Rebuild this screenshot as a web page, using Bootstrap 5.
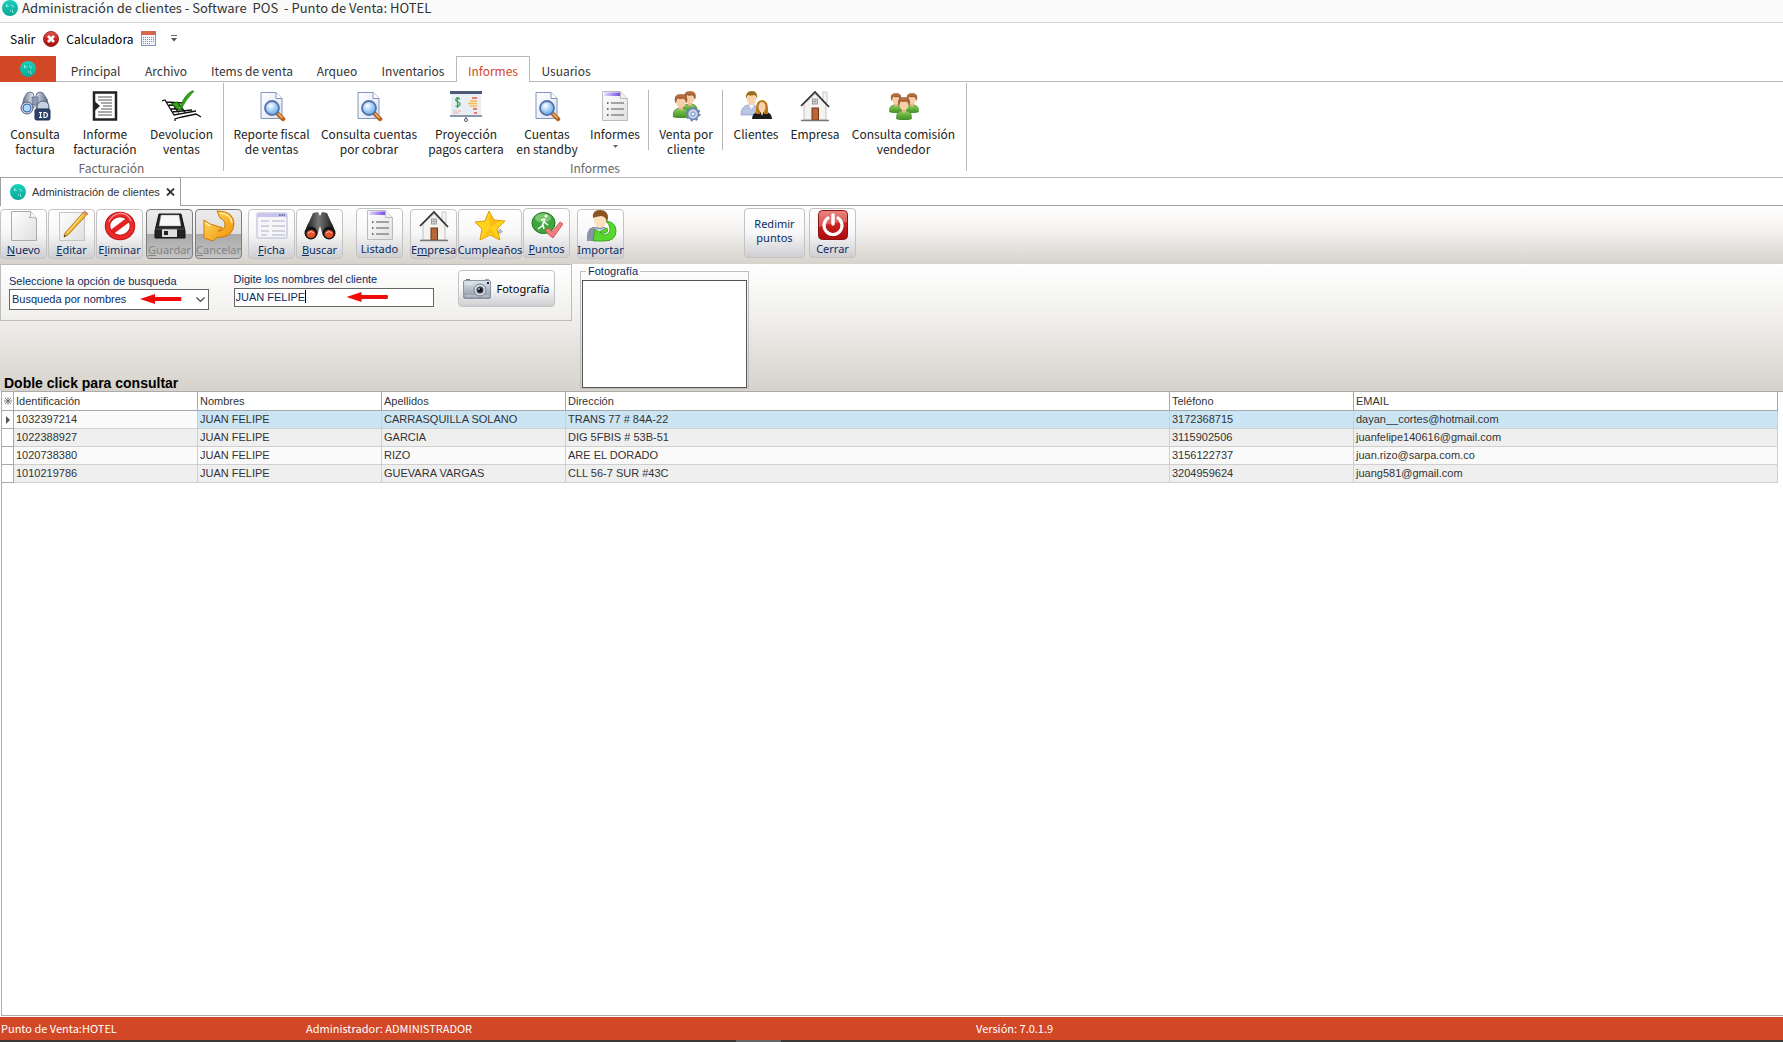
<!DOCTYPE html>
<html lang="es">
<head>
<meta charset="utf-8">
<meta name="viewport" content="width=device-width, initial-scale=1">
<title>Administración de clientes</title>
<link href="https://cdn.jsdelivr.net/npm/bootstrap@5.3.0/dist/css/bootstrap.min.css" rel="stylesheet">
<script src="https://cdn.jsdelivr.net/npm/bootstrap@5.3.0/dist/js/bootstrap.bundle.min.js"></script>
<style>
:root{--accent:#d24726;--line:#b9b9b9;--navy:#0b2c5f}
body{font-family:"Noto Sans CJK SC","Open Sans",sans-serif;font-size:12px;line-height:15px;color:#222;background:#fff;min-height:100vh}
button{font-family:inherit;color:inherit}
svg{display:block;flex:none}
.titlebar{height:23px;background:#fafafa;border-bottom:1px solid #d5d5d5;font-size:13px;line-height:16px;color:#333;padding:0 0 6px 2px;gap:4px}
.titlebar span{white-space:pre}
.quickbar{height:33px;padding:0 10px 2px;gap:7px;color:#000}
.plain-btn{border:0;background:none;padding:0}
.tabs-row{height:26px;border-bottom:1px solid var(--line)}
.file-tab{width:56px;height:26px;background:var(--accent);margin-right:3px}
.rtabs{display:grid;grid-template-columns:73px 68px 104px 66px 86px 74px 72px;height:26px}
.rtabs button{border:1px solid transparent;border-bottom:0;background:none;padding:2px 0 0;color:#333}
.rtabs button.active{border-color:var(--line);background:#fff;color:var(--accent)}
.ribbon{height:96px;border-bottom:1px solid var(--line)}
.rgroup{height:88px;margin-top:1px;border-right:1px solid var(--line)}
.rgroup-items{display:grid;height:77px}
.cols-a{grid-template-columns:70px 70px 83px}
.cols-b{grid-template-columns:95px 100px 94px 68px 68px 74px 66px 52px 125px}
.ritem{border:0;background:none;padding:7px 0 0;display:flex;flex-direction:column;align-items:center;gap:4px;white-space:nowrap}
.sep-r{position:relative}
.sep-r::after{content:"";position:absolute;right:0;top:7px;width:1px;height:60px;background:var(--line)}
.rgroup-title{color:#666;text-align:center;height:15px}
.doc-tabs{height:29px;margin-top:-1px}
.doc-tab{width:181px;border:1px solid #a0a0a0;border-bottom:0;gap:6px;padding:0 9px;font:11px/15px "Liberation Sans",sans-serif;color:#333;white-space:nowrap}
.doc-rest{border-bottom:1px solid #a0a0a0}
.toolbar{height:58px;padding-top:2px;background:linear-gradient(#fff,#f4f3f1 40%,#d6d2cb);font:11px/13px "Noto Sans",sans-serif;color:var(--navy)}
.tbtn{width:47px;height:50px;padding:0 0 2px;border:1px solid #c3c3c3;border-radius:4px;background:linear-gradient(#fff,#f7f7f8 50%,#cfcfd2);display:flex;flex-direction:column;align-items:center;justify-content:space-between;white-space:nowrap}
.tbtn.low{margin-top:1px}
.tbtn.wide{width:64px}
.tbtn.mid{width:61px;white-space:normal;justify-content:center;padding-bottom:4px;line-height:14px}
.tbtn:disabled{border-color:#7d7d7d;background:linear-gradient(#ececec,#dedede 49%,#a9a9a9 50%,#c4c4c4);color:#858585}
.gap1{gap:1px}.gap2{gap:2px}
.ml3{margin-left:3px}.ml4{margin-left:4px}.ml6{margin-left:6px}.ml7{margin-left:7px}.ml13{margin-left:13px}.ml120{margin-left:120px}
.searcharea{height:127px;background:linear-gradient(#fff,#f1f0ed 40%,#d6d2cb);font:11px/13px "Liberation Sans",sans-serif;color:var(--navy);gap:8px}
.left-col{width:572px}
.searchbox{height:57px;border:1px solid #bcbcbc;padding:5px 16px 0 8px}
.fcol-a{padding-top:5px}.fcol-a label{display:block;padding-bottom:1px}
.fcol-b{padding-top:3px}.fcol-b label{display:block;padding-bottom:2px}
.fld{border:1px solid #666;border-radius:0;background:#fff;color:var(--navy);padding:0 1px;display:block;width:200px;font:inherit;outline:0}
select.fld{appearance:none;height:21px;width:200px;padding-left:2px}
input.fld{height:19px;padding-bottom:2px}
.fwrap{position:relative}
.over{position:absolute;pointer-events:none}
.ov-chev{right:4px;top:8px}
.ov-arrow1{left:131px;top:5px}
.ov-arrow2{left:111px;top:4px}
.ov-caret{left:71px;top:2px;width:1px;height:13px;background:#000}
.photo-btn{width:97px;height:37px;border:1px solid #c3c3c3;border-radius:4px;background:linear-gradient(#fff,#f7f7f8 50%,#cfcfd2);font:11px/13px "Noto Sans",sans-serif;color:#000;gap:5px}
.hint{font:bold 14px/16px "Liberation Sans",sans-serif;color:#000;padding-left:4px}
.photo-set{width:169px;height:124px;margin-top:1px;border:1px solid #bdbdbd;padding:0 1px 1px}
.photo-set legend{float:none;width:auto;margin:0 0 0 4px;padding:0 2px;font:inherit;line-height:13px;font-size:11px}
.photo-frame{border:1px solid #555;background:#fff;height:108px;margin-top:2px}
.grid-wrap{border:solid #ababab;border-width:1px 0 1px 1px;margin-left:1px;margin-bottom:1px}
.cgrid{width:calc(100% - 5px);table-layout:fixed;border-collapse:separate;border-spacing:0;font:11px/15px "Liberation Sans",sans-serif;color:#333}
.cgrid th,.cgrid td{padding:0 2px;height:18px;border-right:1px solid #cfcfcf;border-bottom:1px solid #cfcfcf;white-space:nowrap;font-weight:400;background:#fafafa}
.cgrid thead th{height:19px;background:#fff;border-color:#a5a9ac}
.cgrid tbody tr:nth-child(even) td{background:#efefef}
.cgrid tbody tr.current td{background:#cce5f5}
.cgrid tbody tr.current td.idcell{background:#fafafa}
.cgrid thead .ind,.cgrid tbody tr td.ind,.cgrid tbody tr.current td.ind{padding:0;background:#fff;border-color:#a5a9ac}
.cgrid .ind svg{margin:0 auto}
.statusbar{height:23px;background:var(--accent);color:#fff;font-size:11px;display:grid;grid-template-columns:305px 670px 1fr;padding-left:1px;align-items:center}
.shelf{height:2px;background:#3b3838}
.shelf div{width:45px;height:2px;margin-left:736px;background:#666}
</style>
</head>
<body class="d-flex flex-column">
<svg width="0" height="0" class="position-absolute" aria-hidden="true">
<defs>
<linearGradient id="gTeal" x1="0" y1="0" x2="0" y2="1"><stop offset="0" stop-color="#18d3bd"/><stop offset="1" stop-color="#0aa596"/></linearGradient>
<linearGradient id="gPage" x1="0" y1="0" x2="1" y2="1"><stop offset="0" stop-color="#fff"/><stop offset="1" stop-color="#dbe3f4"/></linearGradient>
<linearGradient id="gGrey" x1="0" y1="0" x2="1" y2="1"><stop offset="0" stop-color="#fff"/><stop offset="1" stop-color="#dfdfdf"/></linearGradient>
<linearGradient id="gPurple"><stop offset="0" stop-color="#e6dcff"/><stop offset="1" stop-color="#7a4be6"/></linearGradient>
<linearGradient id="gSteel"><stop offset="0" stop-color="#59647c"/><stop offset=".45" stop-color="#f0f3f8"/><stop offset="1" stop-color="#4f5b75"/></linearGradient>
<linearGradient id="gBlack"><stop offset="0" stop-color="#111"/><stop offset=".45" stop-color="#777"/><stop offset="1" stop-color="#111"/></linearGradient>
<linearGradient id="gGreen" x1="0" y1="0" x2="0" y2="1"><stop offset="0" stop-color="#8ed05a"/><stop offset="1" stop-color="#3f8f22"/></linearGradient>
<linearGradient id="gHair" x1="0" y1="0" x2="0" y2="1"><stop offset="0" stop-color="#c97a45"/><stop offset="1" stop-color="#8a431c"/></linearGradient>
<linearGradient id="gRed" x1="0" y1="0" x2="0" y2="1"><stop offset="0" stop-color="#e25b52"/><stop offset=".5" stop-color="#c9201c"/><stop offset="1" stop-color="#a80d0d"/></linearGradient>
<linearGradient id="gGold" x1="0" y1="0" x2="1" y2="1"><stop offset="0" stop-color="#ffe36a"/><stop offset="1" stop-color="#f08a00"/></linearGradient>
<linearGradient id="gCam" x1="0" y1="0" x2="0" y2="1"><stop offset="0" stop-color="#dfe6ec"/><stop offset="1" stop-color="#8693a2"/></linearGradient>
<radialGradient id="gLens" cx=".4" cy=".35"><stop offset="0" stop-color="#fff"/><stop offset="1" stop-color="#7fbdf0"/></radialGradient>
<symbol id="logo" viewBox="0 0 16 16"><circle cx="8" cy="8" r="8" fill="url(#gTeal)"/><path d="M4 4.500l2.500 1.500-2 1M4.500 4v3M9 5.500h2v2.500M8.500 10v2M10.500 9.500v3h1.500" fill="none" stroke="#b9f4ec" stroke-width=".6"/></symbol>
<symbol id="bino" viewBox="0 0 32 32"><path d="M8 3q3-2 6 0l1 3v12H2.500L5 8zM18 3q3-2 6 0l4 6 2 9H17V6z" fill="url(#gSteel)" stroke="#56617c" stroke-width=".8"/><rect x="13" y="7" width="6" height="8" fill="#8d99b3" stroke="#56617c" stroke-width=".6"/><circle cx="8" cy="18" r="6" fill="#c9d0de" stroke="#56617c"/><circle cx="8" cy="18" r="4" fill="#b3d8fb" stroke="#2f65b5"/><circle cx="24" cy="17" r="6" fill="#c9d0de" stroke="#56617c"/><rect x="16" y="19" width="15" height="11" rx="1.500" fill="#2c4469" stroke="#1d3050"/><path d="M20 22.500h3M21.500 22.500v5M20 27.500h3M25 22.500v5h1.500q2-.5 2-2.500t-2-2.500z" fill="none" stroke="#fff" stroke-width="1.200"/></symbol>
<symbol id="invoice" viewBox="0 0 32 32"><rect x="5" y="2.500" width="22" height="27" fill="#fff" stroke="#222" stroke-width="2.500"/><path d="M6 11.500l5 4.500-5 4.500z" fill="#222"/><path d="M9 7h14M9 10h14M12 13h11M14 16h9M12 19h11M9 22h14M9 25h14" stroke="#555" stroke-width="1.200"/></symbol>
<symbol id="cart" viewBox="0 0 40 32"><path d="M0 11l3-1 9 15 22-4M4 12l17 1M7 15l14 1M9 19l12 0M10 22l20-2M9 12l8 11M15 12l8 10M13 31v-2l7-2 14-3 5 3" fill="none" stroke="#111" stroke-width="1.300"/><path d="M10 14l5-2 3 5Q23 4 30 1h2Q24 9 18 21z" fill="#34a314" stroke="#1c7808" stroke-width=".7"/></symbol>
<symbol id="pagelens" viewBox="0 0 32 32"><path d="M5 2.500h15l6 6v20H5z" fill="url(#gPage)" stroke="#8394bd"/><path d="M20 2.500v6h6" fill="#fff" stroke="#8394bd"/><path d="M21 23l6 6" stroke="#b36222" stroke-width="4.500" stroke-linecap="round"/><path d="M22 23.500l4.500 4.500" stroke="#f2b66a" stroke-width="1.500"/><circle cx="16" cy="18" r="7" fill="url(#gLens)" stroke="#5673a9" stroke-width="1.800"/></symbol>
<symbol id="board" viewBox="0 0 34 32"><rect x="2" y="3" width="30" height="23" fill="#e9eef4"/><rect x="1" y="1" width="32" height="3" fill="#4a5a78"/><rect x="1" y="25" width="32" height="2" fill="#8b98ab"/><path d="M17 27v2" stroke="#4a5a78"/><circle cx="17" cy="30" r="1.500" fill="none" stroke="#4a5a78"/><path d="M11 9q-3-2-4 0t2 3 1.500 3-4 1M8.500 7v11" fill="none" stroke="#2fa84f" stroke-width="1.300"/><path d="M4 21h4M9 21h3M4 23h6" stroke="#e8a09a" stroke-width=".8"/><path d="M21 11h7M19 13.500h9M21 16h7" stroke="#f3bd4f" stroke-width="1.500"/><path d="M23 8h5M24 19h4M25 23h3" stroke="#e2574c" stroke-width="1.300"/></symbol>
<symbol id="list" viewBox="0 0 32 32"><path d="M3.500 1.500h18l7 7v22h-25z" fill="url(#gGrey)" stroke="#bbb"/><path d="M5 2.500h16v3.500H5z" fill="url(#gPurple)"/><path d="M21.500 1.500v7h7" fill="#f2f2f2" stroke="#bbb"/><path d="M12 13h13M12 19h13M12 25h13" stroke="#888" stroke-width="1.300"/><path d="M8 13h1.500M8 19h1.500M8 25h1.500" stroke="#444" stroke-width="1.500"/></symbol>
<symbol id="man" viewBox="0 0 16 22"><path d="M1 21q-1-7 5-8h4q6 1 5 8-7 2-14 0z" fill="url(#gGreen)" stroke="#3a7d20" stroke-width=".6"/><path d="M6 10h4v4q-2 2-4 0z" fill="#e9b58c"/><ellipse cx="8" cy="7" rx="4.500" ry="5.500" fill="#f6cfa9"/><path d="M3 8Q1 0 8 .5 15 0 13 8q-1-4-3-4-4 1-5-.5-1 1-2 4.500z" fill="url(#gHair)" stroke="#7d3c17" stroke-width=".5"/></symbol>
<symbol id="gear" viewBox="0 0 32 32"><use href="#man" x="12" y="1" width="16" height="22"/><use href="#man" x="1" y="4" width="20" height="24"/><circle cx="23" cy="24" r="5.500" fill="#c5d3ec" stroke="#6c83b0" stroke-width="1.500"/><circle cx="23" cy="24" r="6.500" fill="none" stroke="#6c83b0" stroke-width="2" stroke-dasharray="2.200 2.900"/><circle cx="23" cy="24" r="2" fill="#fff" stroke="#6c83b0"/></symbol>
<symbol id="couple" viewBox="0 0 32 32"><path d="M1 25q0-9 7-10h6q6 2 6 10z" fill="#b9c5e2" stroke="#8797bd" stroke-width=".7"/><path d="M9 15l2.500 4 2.500-4z" fill="#fff"/><ellipse cx="11.500" cy="9" rx="4.500" ry="6" fill="#f7d3ab"/><path d="M6 9Q5 1 12 1q6 0 5 8-1-4-3-4-4 1-6 0-1 1-2 4z" fill="#9b6d16"/><path d="M12 29q0-6 6-7h8q6 1 6 7z" fill="#1b1b1e"/><path d="M16 24q-1-14 6-14t6 14h-4v-3h-4v3z" fill="#b8791c"/><ellipse cx="22" cy="17" rx="3.500" ry="5" fill="#f7d3ab"/><path d="M20 21l2 5 2-5z" fill="#f7d3ab"/></symbol>
<symbol id="house" viewBox="0 0 32 32"><rect x="24" y="2" width="4" height="11" fill="#f4f4f4" stroke="#b5b5b5" stroke-width=".7"/><path d="M5 14L16 4l11 11v15H5z" fill="#f4f3ef" stroke="#aaa" stroke-width=".7"/><path d="M2 16L16 2l14 15" fill="none" stroke="#2f2f35" stroke-width="1.700"/><rect x="13.500" y="9" width="5" height="5" fill="#dde3ea" stroke="#888" stroke-width=".8"/><path d="M16 9v5M13.500 11.500h5" stroke="#888" stroke-width=".6"/><rect x="13" y="18" width="6.500" height="12" fill="#b8673a" stroke="#743410"/><path d="M2 30.500h28" stroke="#777" stroke-width="1.500"/></symbol>
<symbol id="team" viewBox="0 0 32 32"><use href="#man" x="0" y="3" width="16" height="20"/><use href="#man" x="16" y="3" width="16" height="20"/><use href="#man" x="6" y="7" width="20" height="23"/></symbol>
<symbol id="page" viewBox="0 0 32 32"><path d="M3.500 1.500h19l6 7v22h-25z" fill="url(#gGrey)" stroke="#aaa"/><path d="M22.500 1.500q1 4-1 6 4-1 7 1" fill="#fff" stroke="#aaa"/></symbol>
<symbol id="edit" viewBox="0 0 32 32"><path d="M3.500 2.500h25v28h-25z" fill="url(#gGrey)" stroke="#c4c4c4"/><path d="M28.500 1l3.500 2.500L12 25l-4 2 1-4z" fill="#f4b62f" stroke="#a36d12" stroke-width=".8"/><path d="M28.500 1l3.500 2.500-2 2-3.500-2.500z" fill="#db8a7c"/><path d="M8 27l.4-2 1.600 1z" fill="#222"/><path d="M27 4.500L11 23" stroke="#ffe79b"/></symbol>
<symbol id="deny" viewBox="0 0 32 32"><ellipse cx="16" cy="16" rx="12.500" ry="11.500" fill="#fff" stroke="#b40f10" stroke-width="5.500"/><ellipse cx="16" cy="16" rx="12.500" ry="11.500" fill="none" stroke="#ec2a2a" stroke-width="4"/><path d="M8 22L24 10" stroke="#e32222" stroke-width="5"/><path d="M5 12Q8 4 16 3.500T27 11" fill="none" stroke="#fba0a0" stroke-width="1.200"/></symbol>
<symbol id="disk" viewBox="0 0 32 32"><path d="M5 4h22l4 17v7H1v-7z" fill="#222" stroke="#111"/><path d="M7 5h18l2 11H5z" fill="#f7f7f7" stroke="#888" stroke-width=".5"/><rect x="8" y="19" width="15" height="8" fill="#ddd"/><rect x="10" y="21" width="4" height="4" fill="#222"/><path d="M2 19h28" stroke="#666" stroke-width=".8"/></symbol>
<symbol id="undo" viewBox="0 0 32 32"><path d="M14 1Q31 1 31 14 30 28 14 27.500L10 31 1 28V10l6 4 13 4-5 3q7 0 7-6 0-5-5-7z" fill="url(#gGold)" stroke="#d07a05"/><path d="M2.500 13l5 3M17 3q11 1 12 10" fill="none" stroke="#fff0a5" stroke-width="1.500"/></symbol>
<symbol id="form" viewBox="0 0 32 32"><rect x="1" y="3" width="30" height="25" rx="1" fill="#f6f6fa" stroke="#b4b5d8"/><rect x="1.500" y="3.500" width="29" height="3.500" fill="#c6c3ee"/><path d="M23 5h6" stroke="#5d59a6" stroke-width="1.500" stroke-dasharray="1.500 .8"/><path d="M5 11h8M5 16h8M5 21h8M5 25h6M16 11h13M16 16h13M16 21h13M16 25h13" stroke="#c8c8d2" stroke-width="1.300"/></symbol>
<symbol id="bino2" viewBox="0 0 32 32"><path d="M9 3l5-1 2 4v10l-3 10H1q0-8 4-14zM23 3l-5-1-2 4v10l3 10h12q0-8-4-14z" fill="url(#gBlack)"/><circle cx="7" cy="23" r="6.500" fill="#161616"/><circle cx="25" cy="23" r="6.500" fill="#161616"/><ellipse cx="7" cy="24" rx="4.500" ry="4" fill="#e8502a"/><ellipse cx="25" cy="24" rx="4.500" ry="4" fill="#e8502a"/><path d="M4 23q3-3 6 0M22 23q3-3 6 0" fill="none" stroke="#ffc0a0"/></symbol>
<symbol id="star" viewBox="0 0 32 32"><path d="M20 27l9-5-3-4z" fill="#b9b9b9"/><path d="M15 1l5 9 11 1-8 8 3 11-10-5-10 5 2-11-7-7 10-1z" fill="#ffd21c" stroke="#e09b08"/><path d="M15 4l1 14 9-7-5-1zM16 18l-7 9 7-4 8 5z" fill="#f6ab0c" opacity=".5"/></symbol>
<symbol id="points" viewBox="0 0 32 32"><ellipse cx="12.500" cy="14" rx="11.500" ry="10.500" fill="#3fa63d" stroke="#1f7421"/><ellipse cx="12" cy="9" rx="8" ry="4.500" fill="#a1dc91" opacity=".6"/><circle cx="15" cy="7" r="1.500" fill="#fff"/><path d="M14 10l-3 7-4 3M13 13l4 3M14 10l-4 1M12 16l1 4" fill="none" stroke="#fff" stroke-width="1.500"/><path d="M14 21l4-2 3 4 8-10 3 2-10 14q-5-3-8-8z" fill="#f08080" stroke="#ca4545" stroke-width=".8"/></symbol>
<symbol id="import" viewBox="0 0 32 32"><path d="M2 31V26q0-7 6-9h12l5 14z" fill="#8c93a8"/><ellipse cx="15" cy="10" rx="6" ry="8" fill="#fde0bd"/><path d="M8 8Q7 0 15 0t8 8l-1 5q-1-7-6-7-6 1-8 2z" fill="#8a5423"/><path d="M10 18q5 3 9 0l4 5v8H9z" fill="#e8f0f8"/><path d="M21 11q10 1 10 10 0 10-12 10H8l2-12 4 3 8-4q2 4-2 5-3 1-5-1 1 3 5 3 5-1 5-6 0-4-4-8z" fill="#58d82c" stroke="#2b9c16" stroke-width=".8"/></symbol>
<symbol id="power" viewBox="0 0 32 32"><rect x="1.500" y="1.500" width="29" height="29" rx="4" fill="url(#gRed)" stroke="#8f1010"/><path d="M2 5q0-3 3-3h22q3 0 3 3v8Q16 13 2 18z" fill="#fff" opacity=".25"/><path d="M11 9a9 9 0 1 0 10 0" fill="none" stroke="#fff" stroke-width="3.200" stroke-linecap="round"/><path d="M16 6v9" stroke="#fff" stroke-width="3.500" stroke-linecap="round"/></symbol>
<symbol id="camera" viewBox="0 0 28 20"><rect x="3" y="0" width="4" height="2" fill="#6b7580"/><rect x="22" y="0" width="4" height="2" fill="#9aa4ae"/><rect x=".5" y="1.500" width="27" height="18" rx="1.500" fill="url(#gCam)" stroke="#8a96a3"/><path d="M2 5h8M2 17h24" stroke="#fff" opacity=".6"/><circle cx="17" cy="11" r="6" fill="#d5dbe1" stroke="#78828d"/><circle cx="17" cy="11" r="3.500" fill="#3d444d"/><circle cx="17" cy="11" r="2" fill="#0a0c10"/><circle cx="16" cy="10" r="1" fill="#9fc0e8"/><rect x="24" y="3" width="2" height="2" fill="#222"/></symbol>
<symbol id="arrow" viewBox="0 0 42 10"><path d="M0 5L15 0v3h26q1 2 0 4H15v3z" fill="#f00a0a"/></symbol>
</defs></svg>

<header>
<div class="titlebar d-flex align-items-center"><svg width="16" height="16"><use href="#logo"/></svg><span>Administración de clientes - Software  POS  - Punto de Venta: HOTEL</span></div>
<div class="quickbar d-flex align-items-center">
<button class="plain-btn d-flex align-items-center gap-2">Salir <svg width="16" height="16" viewBox="0 0 16 16"><circle cx="8" cy="8" r="7.500" fill="url(#gRed)" stroke="#9c2a2a"/><path d="M5 5l6 6M11 5l-6 6" stroke="#fff" stroke-width="2.800"/></svg></button>
<button class="plain-btn d-flex align-items-center gap-2">Calculadora <svg width="15" height="15" viewBox="0 0 15 15"><rect x=".5" y=".5" width="14" height="14" fill="#f2f5fc" stroke="#8293bd"/><rect x="0" y="0" width="15" height="4" fill="#d9644f"/><path d="M2 6.500h11M2 8.500h11M2 10.500h11M2 12.500h8" stroke="#7d90bd" stroke-dasharray="1 1"/></svg></button>
<button class="plain-btn ms-2" aria-label="Personalizar barra"><svg width="6" height="7" viewBox="0 0 6 7"><path d="M0 .5h6" stroke="#666"/><path d="M0 3h6L3 6.500z" fill="#555"/></svg></button>
</div>
<nav class="tabs-row d-flex">
<button class="plain-btn file-tab d-flex align-items-center justify-content-center" aria-label="Archivo"><svg width="16" height="16"><use href="#logo"/></svg></button>
<div class="rtabs"><button>Principal</button><button>Archivo</button><button>Items de venta</button><button>Arqueo</button><button>Inventarios</button><button class="active">Informes</button><button>Usuarios</button></div>
</nav>
<div class="ribbon d-flex">
<div class="rgroup"><div class="rgroup-items cols-a">
<button class="ritem"><svg width="32" height="32"><use href="#bino"/></svg><span>Consulta<br>factura</span></button>
<button class="ritem"><svg width="32" height="32"><use href="#invoice"/></svg><span>Informe<br>facturación</span></button>
<button class="ritem"><svg width="40" height="32"><use href="#cart"/></svg><span>Devolucion<br>ventas</span></button>
</div><div class="rgroup-title">Facturación</div></div>
<div class="rgroup"><div class="rgroup-items cols-b">
<button class="ritem"><svg width="32" height="32"><use href="#pagelens"/></svg><span>Reporte fiscal<br>de ventas</span></button>
<button class="ritem"><svg width="32" height="32"><use href="#pagelens"/></svg><span>Consulta cuentas<br>por cobrar</span></button>
<button class="ritem"><svg width="34" height="32"><use href="#board"/></svg><span>Proyección<br>pagos cartera</span></button>
<button class="ritem"><svg width="32" height="32"><use href="#pagelens"/></svg><span>Cuentas<br>en standby</span></button>
<button class="ritem sep-r"><svg width="32" height="32"><use href="#list"/></svg><span>Informes</span><svg width="5" height="3" viewBox="0 0 5 3"><path d="M0 0h5L2.500 3z" fill="#666"/></svg></button>
<button class="ritem sep-r"><svg width="32" height="32"><use href="#gear"/></svg><span>Venta por<br>cliente</span></button>
<button class="ritem"><svg width="32" height="32"><use href="#couple"/></svg><span>Clientes</span></button>
<button class="ritem"><svg width="32" height="32"><use href="#house"/></svg><span>Empresa</span></button>
<button class="ritem"><svg width="32" height="32"><use href="#team"/></svg><span>Consulta comisión<br>vendedor</span></button>
</div><div class="rgroup-title">Informes</div></div>
</div>
<div class="doc-tabs d-flex">
<div class="doc-tab d-flex align-items-center"><svg width="16" height="16"><use href="#logo"/></svg><span>Administración de clientes</span><button class="plain-btn ms-auto" aria-label="Cerrar pestaña"><svg width="9" height="8" viewBox="0 0 9 8"><path d="M1 .5l7 7M8 .5l-7 7" stroke="#333" stroke-width="1.800"/></svg></button></div>
<div class="doc-rest flex-grow-1"></div>
</div>
</header>

<main class="d-flex flex-column flex-grow-1">
<div class="toolbar d-flex align-items-start">
<div class="d-flex gap1">
<button class="tbtn low"><svg width="32" height="32"><use href="#page"/></svg><span><u>N</u>uevo</span></button>
<button class="tbtn low"><svg width="32" height="32"><use href="#edit"/></svg><span><u>E</u>ditar</span></button>
<button class="tbtn low"><svg width="32" height="32"><use href="#deny"/></svg><span>E<u>l</u>iminar</span></button>
</div>
<div class="d-flex gap2 ml3">
<button class="tbtn low" disabled><svg width="32" height="32"><use href="#disk"/></svg><span><u>G</u>uardar</span></button>
<button class="tbtn low" disabled><svg width="32" height="32"><use href="#undo"/></svg><span><u>C</u>ancelar</span></button>
</div>
<div class="d-flex gap1 ml6">
<button class="tbtn low"><svg width="32" height="32"><use href="#form"/></svg><span><u>F</u>icha</span></button>
<button class="tbtn low"><svg width="32" height="32"><use href="#bino2"/></svg><span><u>B</u>uscar</span></button>
</div>
<button class="tbtn ml13"><svg width="32" height="32"><use href="#list"/></svg><span>Listado</span></button>
<div class="d-flex gap1 ml7">
<button class="tbtn low"><svg width="32" height="32"><use href="#house"/></svg><span>E<u>m</u>presa</span></button>
<button class="tbtn low wide"><svg width="32" height="32"><use href="#star"/></svg><span>Cumpleaños</span></button>
<button class="tbtn"><svg width="32" height="32"><use href="#points"/></svg><span><u>P</u>untos</span></button>
</div>
<button class="tbtn low ml7"><svg width="32" height="32"><use href="#import"/></svg><span>Importar</span></button>
<button class="tbtn mid ml120"><span>Redimir puntos</span></button>
<button class="tbtn ml4"><svg width="32" height="32"><use href="#power"/></svg><span>Cerrar</span></button>
</div>

<div class="searcharea d-flex">
<div class="left-col d-flex flex-column justify-content-between">
<div class="searchbox d-flex align-items-start justify-content-between">
<div class="fcol-a"><label for="modo">Seleccione la opción de busqueda</label>
<div class="fwrap"><select id="modo" class="fld"><option>Busqueda por nombres</option></select>
<svg class="over ov-chev" width="9" height="6" viewBox="0 0 9 6"><path d="M.5 .5l4 4 4-4" fill="none" stroke="#444" stroke-width="1.200"/></svg>
<svg class="over ov-arrow1" width="42" height="10"><use href="#arrow"/></svg></div></div>
<div class="fcol-b"><label for="nombre">Digite los nombres del cliente</label>
<div class="fwrap"><input id="nombre" class="fld" value="JUAN FELIPE"><i class="over ov-caret"></i>
<svg class="over ov-arrow2" width="45" height="10"><use href="#arrow"/></svg></div></div>
<button class="photo-btn d-flex align-items-center justify-content-center p-0"><svg width="28" height="20"><use href="#camera"/></svg>Fotografía</button>
</div>
<div class="hint">Doble click para consultar</div>
</div>
<fieldset class="photo-set"><legend>Fotografía</legend><div class="photo-frame"></div></fieldset>
</div>

<div class="grid-wrap flex-grow-1">
<table class="cgrid">
<colgroup><col style="width:12px"><col style="width:184px"><col style="width:184px"><col style="width:184px"><col><col style="width:184px"><col style="width:424px"></colgroup>
<thead><tr><th class="ind"><svg width="8" height="8" viewBox="0 0 8 8"><path d="M4 0v8M0 4h8M1 1l6 6M7 1L1 7" stroke="#666" stroke-width=".9"/></svg></th><th>Identificación</th><th>Nombres</th><th>Apellidos</th><th>Dirección</th><th>Teléfono</th><th>EMAIL</th></tr></thead>
<tbody>
<tr class="current"><td class="ind"><svg width="4" height="8" viewBox="0 0 4 8"><path d="M0 0l4 4-4 4z" fill="#555"/></svg></td><td class="idcell">1032397214</td><td>JUAN FELIPE</td><td>CARRASQUILLA SOLANO</td><td>TRANS 77 # 84A-22</td><td>3172368715</td><td>dayan__cortes@hotmail.com</td></tr>
<tr><td class="ind"></td><td>1022388927</td><td>JUAN FELIPE</td><td>GARCIA</td><td>DIG 5FBIS # 53B-51</td><td>3115902506</td><td>juanfelipe140616@gmail.com</td></tr>
<tr><td class="ind"></td><td>1020738380</td><td>JUAN FELIPE</td><td>RIZO</td><td>ARE EL DORADO</td><td>3156122737</td><td>juan.rizo@sarpa.com.co</td></tr>
<tr><td class="ind"></td><td>1010219786</td><td>JUAN FELIPE</td><td>GUEVARA VARGAS</td><td>CLL 56-7 SUR #43C</td><td>3204959624</td><td>juang581@gmail.com</td></tr>
</tbody></table>
</div>
</main>
<footer><div class="statusbar"><span>Punto de Venta:HOTEL</span><span>Administrador: ADMINISTRADOR</span><span>Versión: 7.0.1.9</span></div><div class="shelf"><div></div></div></footer>
</body>
</html>
